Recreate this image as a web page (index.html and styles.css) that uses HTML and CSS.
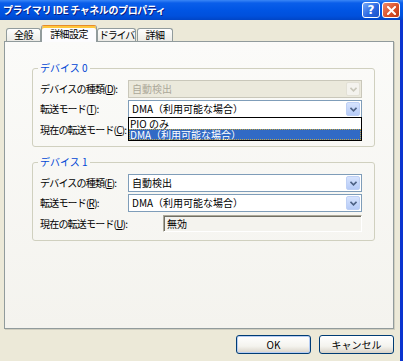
FILE: index.html
```html
<!DOCTYPE html>
<html lang="ja">
  <head>
    <meta charset="UTF-8" />
    <title>プライマリ IDE チャネルのプロパティ</title>
    <link rel="stylesheet" href="styles.css">
  </head>
  <body>
    <div class="window">
      <div class="titlebar">
        <span class="title">プライマリ IDE チャネルのプロパティ</span>
        <div class="caption-buttons">
          <span class="cap-btn help">?</span>
          <span class="cap-btn close">
            <svg width="9" height="9" viewBox="0 0 9 9">
              <path d="M1 1 L8 8 M8 1 L1 8" stroke="#fff" stroke-width="2" stroke-linecap="square" />
            </svg>
          </span>
        </div>
      </div>

      <div class="client">
        <div class="tabs">
          <div class="tab tab-general">全般</div>
          <div class="tab tab-active">詳細設定</div>
          <div class="tab tab-driver">ドライバ</div>
          <div class="tab tab-detail">詳細</div>
        </div>

        <div class="panel">
          <fieldset class="group">
            <legend>デバイス 0</legend>
            <div class="row">
              <label class="label">デバイスの種類(<u>D</u>):</label>
              <div class="combo disabled">
                <span class="combo-text">自動検出</span>
                <span class="combo-btn">
                  <svg width="7" height="5" viewBox="0 0 7 5"><polyline points="0.5,0.8 3.5,3.8 6.5,0.8" fill="none" stroke="#C9C7BA" stroke-width="1.6" /></svg>
                </span>
              </div>
            </div>
            <div class="row">
              <label class="label">転送モード(<u>T</u>):</label>
              <div class="combo">
                <span class="combo-text">DMA（利用可能な場合）</span>
                <span class="combo-btn">
                  <svg width="7" height="5" viewBox="0 0 7 5"><polyline points="0.5,0.8 3.5,3.8 6.5,0.8" fill="none" stroke="#4D6185" stroke-width="1.6" /></svg>
                </span>
                <div class="listbox">
                  <div class="list-item">PIO のみ</div>
                  <div class="list-item selected">DMA（利用可能な場合）</div>
                </div>
              </div>
            </div>
            <div class="row row-current">
              <!-- 右側はドロップダウンに隠れる -->
              <label class="label label-clipped">現在の転送モード(<u>C</u>):</label>
              <div class="field field-hidden"></div>
            </div>
          </fieldset>

          <fieldset class="group">
            <legend>デバイス 1</legend>
            <div class="row">
              <label class="label">デバイスの種類(<u>E</u>):</label>
              <div class="combo">
                <span class="combo-text">自動検出</span>
                <span class="combo-btn">
                  <svg width="7" height="5" viewBox="0 0 7 5"><polyline points="0.5,0.8 3.5,3.8 6.5,0.8" fill="none" stroke="#4D6185" stroke-width="1.6" /></svg>
                </span>
              </div>
            </div>
            <div class="row">
              <label class="label">転送モード(<u>R</u>):</label>
              <div class="combo">
                <span class="combo-text">DMA（利用可能な場合）</span>
                <span class="combo-btn">
                  <svg width="7" height="5" viewBox="0 0 7 5"><polyline points="0.5,0.8 3.5,3.8 6.5,0.8" fill="none" stroke="#4D6185" stroke-width="1.6" /></svg>
                </span>
              </div>
            </div>
            <div class="row row-current">
              <label class="label label-wide">現在の転送モード(<u>U</u>):</label>
              <div class="field">無効</div>
            </div>
          </fieldset>
        </div>

        <div class="buttons">
          <button class="btn btn-default">OK</button>
          <button class="btn">キャンセル</button>
        </div>
      </div>
    </div>
  </body>
</html>
```

FILE: styles.css
```css
body {
  margin: 0;
  background-color: #ece9d8;
  font-family: "Noto Sans CJK JP", sans-serif;
  font-size: 10px;
  color: #000;
  overflow: hidden;
}
.window {
  width: 403px;
  height: 361px;
}
.titlebar {
  height: 20px;
  display: flex;
  align-items: center;
  justify-content: space-between;
  background: linear-gradient(#3a86f6 0, #0a5eea 3px, #0055e4 10px, #0050dc 16px, #0045c6 20px);
}
.title {
  color: #fff;
  font-weight: bold;
  font-size: 10px;
  line-height: 12px;
  letter-spacing: -0.4px;
  padding-left: 3px;
  text-shadow: 1px 1px 0 #0a1e84;
  white-space: nowrap;
}
.caption-buttons {
  display: flex;
  gap: 2px;
  margin-right: 3px;
}
.cap-btn {
  width: 18px;
  height: 16px;
  box-sizing: border-box;
  border: 1px solid #fff;
  border-radius: 3px;
  display: flex;
  align-items: center;
  justify-content: center;
  color: #fff;
}
.help {
  background: linear-gradient(135deg, #76aaf9, #2c68e2 55%, #1c50c6);
  font-family: "DejaVu Sans", sans-serif;
  font-weight: bold;
  font-size: 12px;
  line-height: 12px;
}
.close {
  background: linear-gradient(135deg, #f2896a, #d8522c 55%, #bd3915);
}
.client {
  width: 403px;
  height: 341px;
  box-sizing: border-box;
  border-right: 3px solid #0a34cf;
  padding: 5px 0 0 4px;
}
.tabs {
  display: flex;
  align-items: flex-end;
  height: 16px;
  padding-left: 2px;
  position: relative;
  z-index: 1;
}
.tab {
  height: 13px;
  box-sizing: border-box;
  border: 1px solid #919b9c;
  border-bottom: 0;
  border-radius: 3px 3px 0 0;
  background: linear-gradient(#fefefe, #ecebe6);
  text-align: center;
  line-height: 12px;
  letter-spacing: -0.6px;
  white-space: nowrap;
}
.tab-general {
  width: 35px;
}
.tab-active {
  width: 56px;
  height: 17px;
  margin-bottom: -1px;
  padding-top: 2px;
  border-top-color: #e68b2c;
  box-shadow: inset 0 2px 0 #ffc73c;
  background: #fcfcfe;
}
.tab-driver {
  width: 39px;
  letter-spacing: -1.2px;
}
.tab-detail {
  width: 36px;
  margin-left: 1px;
}
.panel {
  width: 390px;
  height: 288px;
  box-sizing: border-box;
  border: 1px solid #919b9c;
  background: linear-gradient(#fbfbf9, #f4f3ee);
  box-shadow: 1px 1px 0 #d0cebf;
  padding-top: 20px;
}
.group {
  margin: 0 0 0 27px;
  width: 343px;
  min-width: 0;
  box-sizing: border-box;
  border: 1px solid #d0d0bf;
  border-radius: 3px;
  padding: 6px 12px 8px 7px;
}
.group + .group {
  margin-top: 9px;
}
.group legend {
  padding: 0 2px;
  margin-left: -2px;
  color: #0046d5;
  line-height: 12px;
}
.row {
  display: flex;
  align-items: center;
  height: 18px;
}
.row + .row {
  margin-top: 2px;
}
.row-current {
  height: 17px;
}
.row + .row-current {
  margin-top: 3px;
}
.label {
  width: 88px;
  flex: none;
  letter-spacing: -0.8px;
  line-height: 12px;
  white-space: nowrap;
}
.label-wide {
  width: 123px;
}
.label-clipped {
  width: 87px;
  overflow: hidden;
}
.combo {
  position: relative;
  flex: 1;
  height: 18px;
  box-sizing: border-box;
  border: 1px solid #7f9db9;
  background: #fff;
  display: flex;
  align-items: center;
}
.combo-text {
  flex: 1;
  padding-left: 3px;
  line-height: 12px;
  white-space: nowrap;
}
.combo-btn {
  width: 14px;
  height: 14px;
  margin-right: 1px;
  box-sizing: border-box;
  border: 1px solid #bed0f5;
  border-radius: 2px;
  background: linear-gradient(#d6e3fd, #b6cbf7);
  display: flex;
  align-items: center;
  justify-content: center;
}
.combo.disabled {
  border-color: #c9c7ba;
  background: #ebe9dc;
  color: #aca899;
}
.combo.disabled .combo-btn {
  border-color: #e3e1d6;
  background: #f4f3ee;
}
.listbox {
  position: absolute;
  left: -1px;
  right: -1px;
  top: 100%;
  border: 1px solid #000;
  background: #fff;
  z-index: 2;
}
.list-item {
  height: 11px;
  line-height: 11px;
  padding-left: 1px;
  white-space: nowrap;
}
.list-item.selected {
  background: #316ac5;
  color: #fff;
  outline: 1px dotted #c8a640;
  outline-offset: -1px;
}
.field {
  width: 199px;
  height: 17px;
  box-sizing: border-box;
  border: 1px solid;
  border-color: #aca899 #fff #fff #aca899;
  box-shadow: inset 1px 1px 0 #716f64;
  background: #f4f3ee;
  padding-left: 3px;
  line-height: 15px;
  white-space: nowrap;
}
.field-hidden {
  margin-left: 36px;
}
.buttons {
  display: flex;
  justify-content: flex-end;
  gap: 8px;
  width: 390px;
  margin-top: 6px;
}
.btn {
  width: 75px;
  height: 19px;
  padding: 0;
  border: 1px solid #003c74;
  border-radius: 3px;
  background: linear-gradient(#ffffff, #f4f3ee 60%, #d8d2c7);
  font-family: "Noto Sans CJK JP", sans-serif;
  font-size: 10px;
  line-height: 12px;
  color: #000;
}
.btn-default {
  box-shadow: inset 0 0 0 1px #b7cdf3;
}
```
